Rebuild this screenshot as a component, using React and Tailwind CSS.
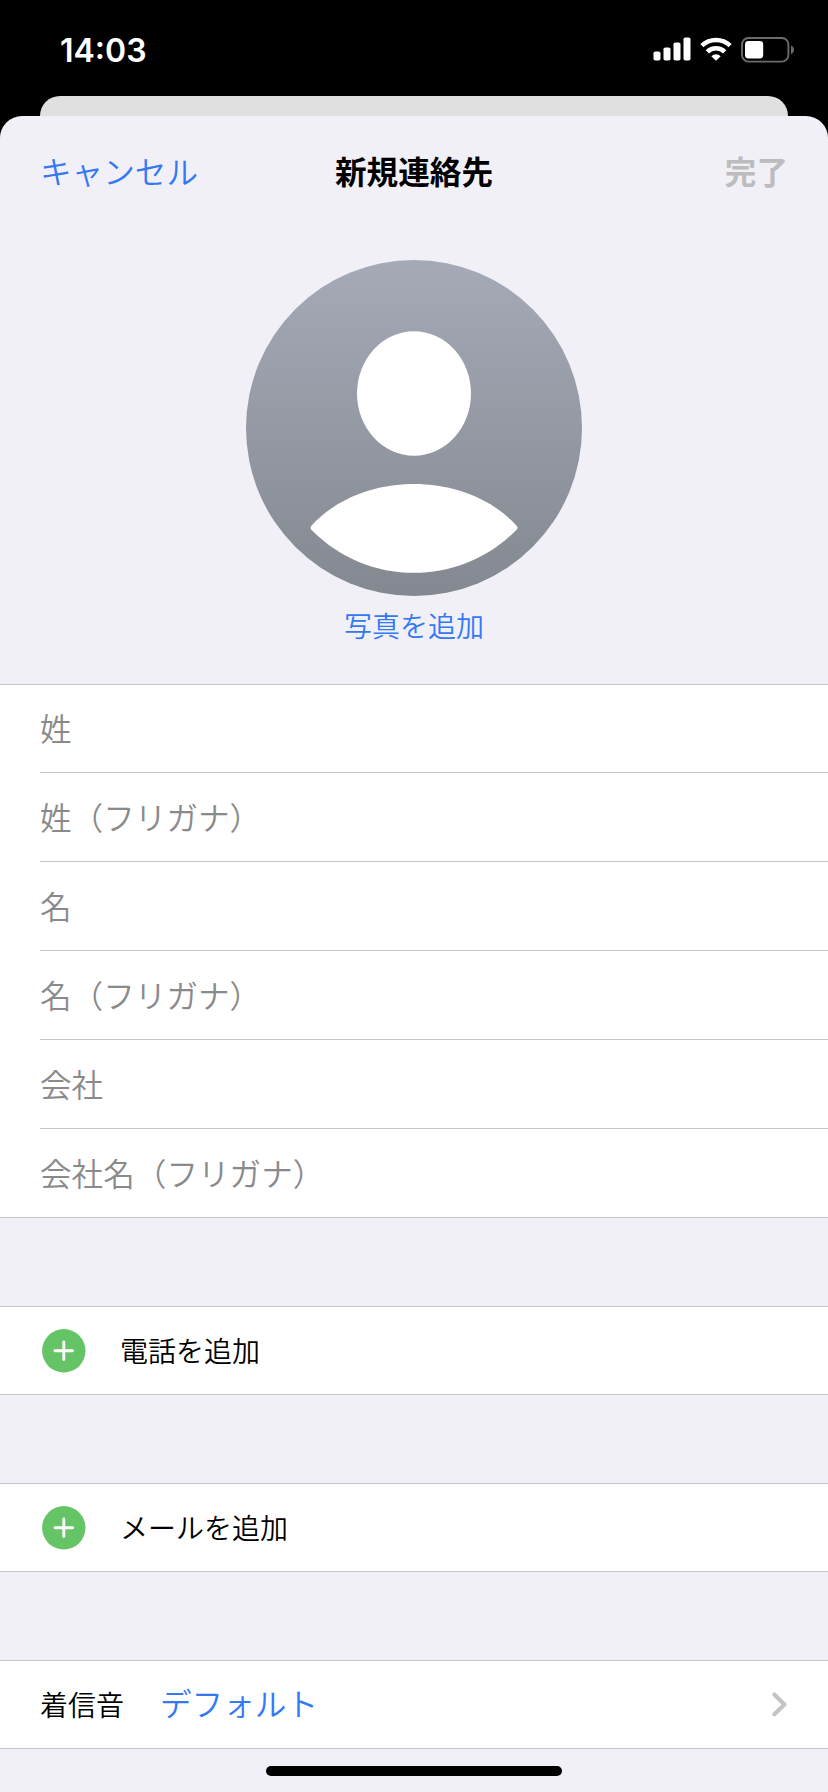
const nameFields = [
  '姓',
  '姓（フリガナ）',
  '名',
  '名（フリガナ）',
  '会社',
  '会社名（フリガナ）',
]

function SignalIcon() {
  return (
    <svg width="38" height="24" viewBox="0 0 38 24" fill="white">
      <rect x="0.5" y="14.5" width="7" height="9" rx="1.8" />
      <rect x="10.5" y="10.5" width="7" height="13" rx="1.8" />
      <rect x="20.5" y="5.5" width="7" height="18" rx="1.8" />
      <rect x="30.5" y="0.5" width="7" height="23" rx="1.8" />
    </svg>
  )
}

function WifiIcon() {
  return (
    <svg width="32" height="24" viewBox="0 0 32 24" fill="none" stroke="white" strokeWidth="4.6">
      <path d="M1.9 8.6a20.5 20.5 0 0 1 28.2 0" />
      <path d="M7.3 14.8a12.6 12.6 0 0 1 17.4 0" />
      <path d="M16 23.8l-4.7-4.6a6.8 6.8 0 0 1 9.4 0z" fill="white" stroke="none" />
    </svg>
  )
}

function BatteryIcon() {
  return (
    <svg width="54" height="26" viewBox="0 0 54 26">
      <rect x="1" y="1" width="46.4" height="23.6" rx="6.5" fill="none" stroke="#6b6b6b" strokeWidth="1.9" />
      <rect x="4" y="4" width="18.2" height="17.4" rx="3.4" fill="white" />
      <path d="M50 8.6c4 1.6 4 7 0 8.6z" fill="#6b6b6b" />
    </svg>
  )
}

function StatusBar() {
  return (
    <div className="flex h-24 items-start justify-between pr-[33px] pl-[60px]">
      <span className="pt-[31px] font-['Inter'] text-[32px] leading-[40px] font-semibold text-white">14:03</span>
      <div className="flex items-start pt-[37px]">
        <SignalIcon />
        <div className="ml-[9px]"><WifiIcon /></div>
        <div className="ml-[9px]"><BatteryIcon /></div>
      </div>
    </div>
  )
}

function Avatar() {
  return (
    <svg width="336" height="336" viewBox="0 0 336 336">
      <defs>
        <linearGradient id="avatar" x1="0" y1="0" x2="0" y2="1">
          <stop offset="0" stopColor="#a6aab7" />
          <stop offset="1" stopColor="#848890" />
        </linearGradient>
      </defs>
      <circle cx="168" cy="168" r="168" fill="url(#avatar)" />
      <ellipse cx="168" cy="133.5" rx="57" ry="62.3" fill="white" />
      <path
        d="M65.2 266C89 239.5 127 224 168 224S247 239.5 270.8 266Q272.2 267.8 270.8 269.4C243 298 206 312.8 168 312.8S93 298 65.2 269.4Q63.8 267.8 65.2 266z"
        fill="white"
      />
    </svg>
  )
}

function AddRow({ label }) {
  return (
    <div className="flex h-[89px] items-center border-y border-[#c6c6c8] bg-white pl-[42px]">
      <svg width="44" height="44" viewBox="0 0 44 44">
        <circle cx="21.8" cy="21.8" r="21.7" fill="#65c466" />
        <path d="M21.8 13v17.6M13 21.8h17.6" stroke="white" strokeWidth="2.9" strokeLinecap="round" />
      </svg>
      <span className="ml-[34px] pb-[2px] text-[28px] text-black">{label}</span>
    </div>
  )
}

export default function App() {
  return (
    <div className="flex h-[1792px] w-[828px] flex-col overflow-hidden bg-black font-['Noto_Sans_CJK_JP',sans-serif] leading-[40px] font-[350]">
      <StatusBar />

      {/* Edge of the card behind the sheet */}
      <div className="mx-10 -mb-6 h-11 shrink-0 rounded-t-[20px] bg-[#e0e0e0]" />

      <div className="flex flex-1 flex-col rounded-t-[22px] bg-[#f1f0f6]">
        <header className="grid h-[108px] grid-cols-3 items-center px-10 text-[31.6px]">
          <span className="text-[#3478f6]">キャンセル</span>
          <span className="text-center font-bold text-black">新規連絡先</span>
          <span className="text-right font-bold text-[#bcbcbe]">完了</span>
        </header>

        <div className="flex h-[460px] flex-col items-center pt-9">
          <Avatar />
          <span className="pt-[9px] text-[28px] text-[#3478f6]">写真を追加</span>
        </div>

        <div className="border-y border-[#c6c6c8] bg-white pl-10">
          {nameFields.map((field, i) => (
            <div
              key={field}
              className={`flex items-center border-[#c6c6c8] pb-[3px] text-[31.6px] text-[#8a8a8c] ${
                i === 0 ? 'h-[88px] border-b' : i === nameFields.length - 1 ? 'h-[88px]' : 'h-[89px] border-b'
              }`}
            >
              {field}
            </div>
          ))}
        </div>

        <div className="mt-[88px]"><AddRow label="電話を追加" /></div>
        <div className="mt-[88px]"><AddRow label="メールを追加" /></div>

        <div className="mt-[88px] flex h-[89px] items-center border-y border-[#c6c6c8] bg-white pr-[41px] pl-10">
          <span className="pb-px text-[28px] text-black">着信音</span>
          <span className="ml-9 pb-[5px] text-[31.6px] text-[#3478f6]">デフォルト</span>
          <svg className="ml-auto" width="15" height="25" viewBox="0 0 15 25" fill="none">
            <path d="M2.4 2.6l10 9.8-10 9.8" stroke="#c4c4c6" strokeWidth="4.2" strokeLinecap="round" strokeLinejoin="round" />
          </svg>
        </div>

        <div className="mx-auto mt-[17px] h-[10px] w-[296px] rounded-full bg-black" />
      </div>
    </div>
  )
}
